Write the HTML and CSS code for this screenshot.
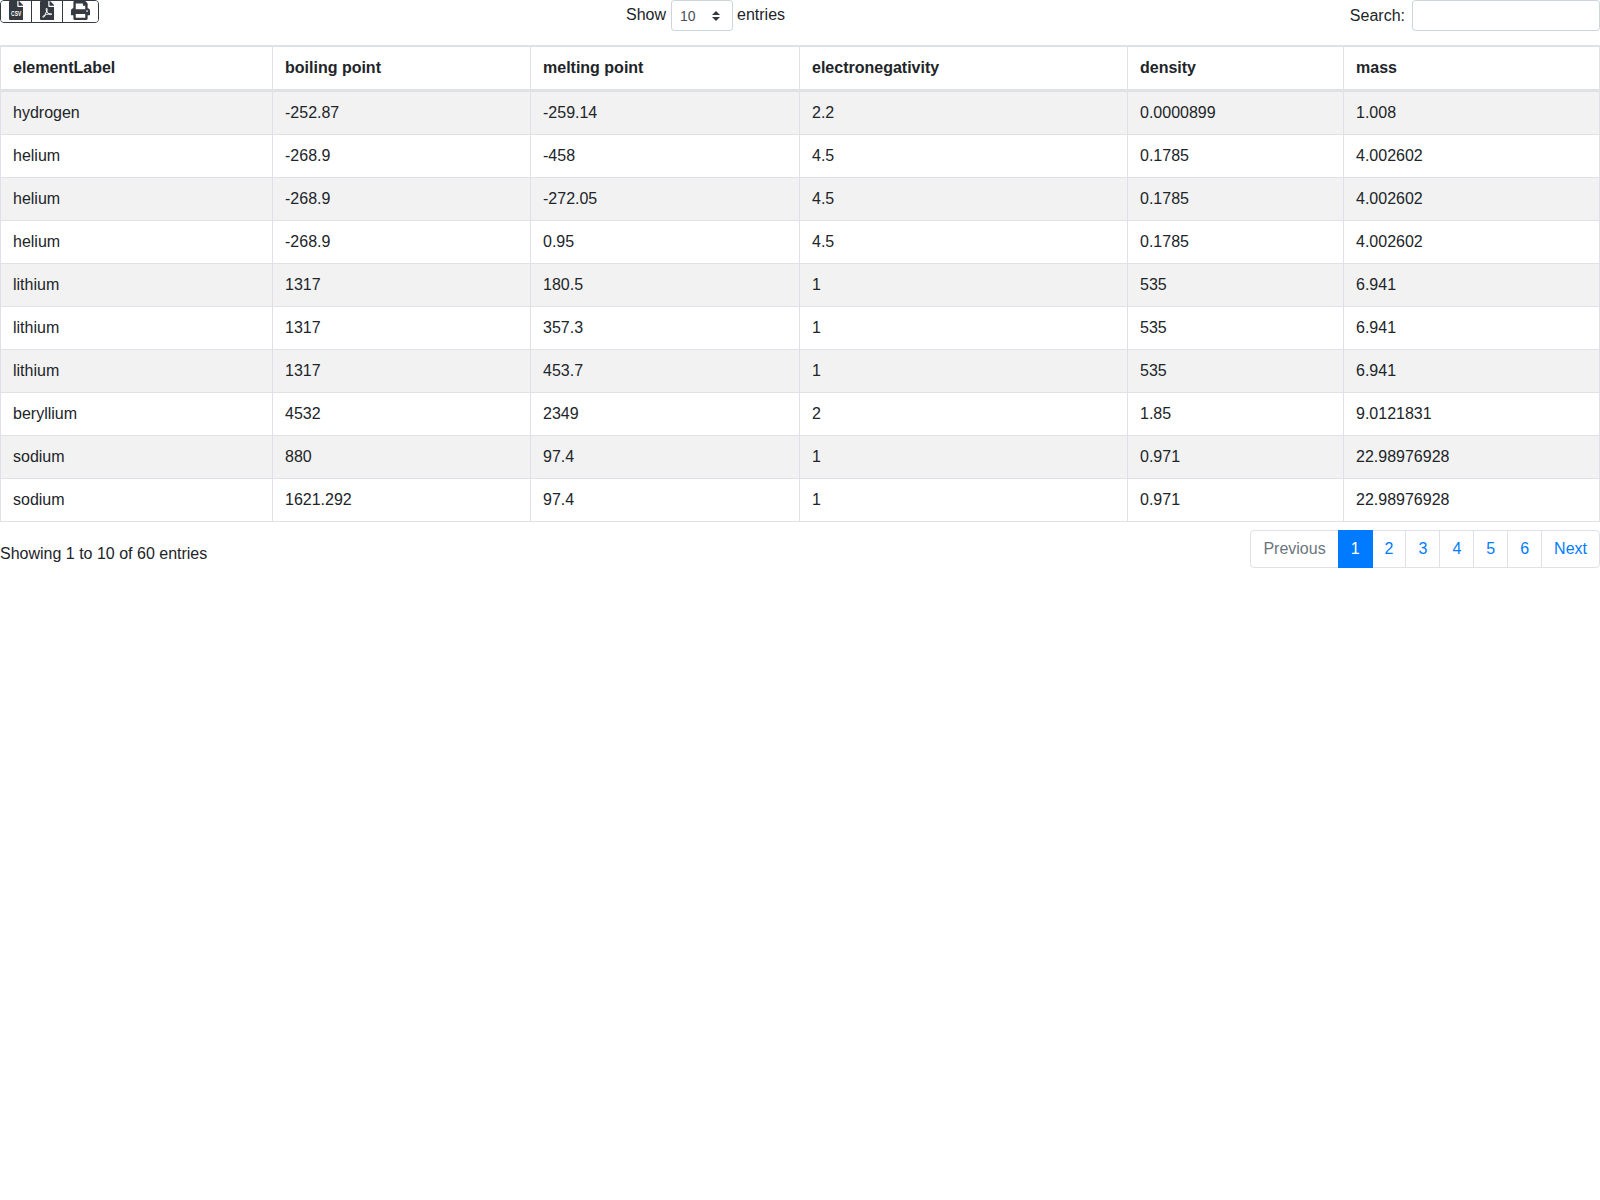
FILE: index.html
```html
<!DOCTYPE html>
<html lang="en">
<head>
<meta charset="utf-8">
<title>Elements</title>
<link rel="stylesheet" href="styles.css">
</head>
<body>
<div class="toolbar">
  <div class="btn-group">
    <button class="btn btn-file" type="button" aria-label="CSV">
      <svg class="icon file" viewBox="0 0 384 512"><path d="M224 136V0H24C10.7 0 0 10.7 0 24v464c0 13.3 10.7 24 24 24h336c13.3 0 24-10.7 24-24V160H248c-13.2 0-24-10.8-24-24zM377 105L279 7c-4.500-4.500-10.600-7-17-7h-6v128h128v-6.100c0-6.300-2.500-12.400-7-16.900z"/><text class="csv" x="192" y="400" text-anchor="middle" textLength="270" lengthAdjust="spacingAndGlyphs">CSV</text></svg>
    </button>
    <button class="btn btn-file-next" type="button" aria-label="PDF">
      <svg class="icon file" viewBox="0 0 384 512"><path d="M181.9 256.1c-5-16-4.900-46.900-2-46.900 8.400 0 7.600 36.900 2 46.900zm-1.700 47.200c-7.700 20.200-17.300 43.300-28.400 62.700 18.300-7 39-17.200 62.900-21.900-12.700-9.600-24.900-23.400-34.500-40.800zM86.100 428.100c0 .8 13.200-5.400 34.900-40.200-6.700 6.300-29.100 24.500-34.900 40.200zM248 160h136v328c0 13.300-10.700 24-24 24H24c-13.300 0-24-10.700-24-24V24C0 10.700 10.700 0 24 0h200v136c0 13.200 10.800 24 24 24zm-8 171.800c-20-12.200-33.300-29-42.700-53.800 4.500-18.500 11.600-46.600 6.200-64.200-4.700-29.400-42.400-26.500-47.800-6.800-5 18.300-.4 44.100 8.100 77-11.600 27.600-28.700 64.600-40.800 85.800-.1 0-.1.1-.2.1-27.100 13.900-73.600 44.500-54.500 68 5.600 6.900 16 10 21.500 10 17.900 0 35.700-18 61.100-61.800 25.800-8.500 54.100-19.100 79-23.200 21.700 11.800 47.100 19.500 64 19.500 29.200 0 31.200-32 19.700-43.400-13.900-13.600-54.300-9.700-73.600-7.200zM377 105L279 7c-4.500-4.500-10.600-7-17-7h-6v128h128v-6.100c0-6.300-2.500-12.400-7-16.900zm-74.100 255.300c4.100-2.700-2.500-11.900-42.800-9 37.100 15.800 42.800 9 42.800 9z"/></svg>
    </button>
    <button class="btn btn-print" type="button" aria-label="Print">
      <svg class="icon print" viewBox="0 0 512 512"><path d="M448 192V77.250c0-8.490-3.370-16.620-9.370-22.630L393.370 9.370c-6-6-14.140-9.370-22.630-9.370H96C78.330 0 64 14.330 64 32v160c-35.350 0-64 28.650-64 64v112c0 8.840 7.160 16 16 16h48v96c0 17.670 14.330 32 32 32h320c17.670 0 32-14.330 32-32v-96h48c8.840 0 16-7.160 16-16V256c0-35.350-28.650-64-64-64zm-64 256H128v-96h256v96zm0-224H128V64h192v48c0 8.840 7.160 16 16 16h48v96zm48 72c-13.250 0-24-10.750-24-24 0-13.260 10.750-24 24-24s24 10.740 24 24c0 13.250-10.750 24-24 24z"/></svg>
    </button>
  </div>
  <label class="length">Show <select class="select"><option>10</option><option>25</option><option>50</option><option>100</option></select> entries</label>
  <label class="search">Search: <input class="search-input" type="search"></label>
</div>

<table class="data">
  <thead>
    <tr><th>elementLabel</th><th>boiling point</th><th>melting point</th><th>electronegativity</th><th>density</th><th>mass</th></tr>
  </thead>
  <tbody>
    <tr><td>hydrogen</td><td>-252.87</td><td>-259.14</td><td>2.2</td><td>0.0000899</td><td>1.008</td></tr>
    <tr><td>helium</td><td>-268.9</td><td>-458</td><td>4.5</td><td>0.1785</td><td>4.002602</td></tr>
    <tr><td>helium</td><td>-268.9</td><td>-272.05</td><td>4.5</td><td>0.1785</td><td>4.002602</td></tr>
    <tr><td>helium</td><td>-268.9</td><td>0.95</td><td>4.5</td><td>0.1785</td><td>4.002602</td></tr>
    <tr><td>lithium</td><td>1317</td><td>180.5</td><td>1</td><td>535</td><td>6.941</td></tr>
    <tr><td>lithium</td><td>1317</td><td>357.3</td><td>1</td><td>535</td><td>6.941</td></tr>
    <tr><td>lithium</td><td>1317</td><td>453.7</td><td>1</td><td>535</td><td>6.941</td></tr>
    <tr><td>beryllium</td><td>4532</td><td>2349</td><td>2</td><td>1.85</td><td>9.0121831</td></tr>
    <tr><td>sodium</td><td>880</td><td>97.4</td><td>1</td><td>0.971</td><td>22.98976928</td></tr>
    <tr><td>sodium</td><td>1621.292</td><td>97.4</td><td>1</td><td>0.971</td><td>22.98976928</td></tr>
  </tbody>
</table>

<div class="footer">
  <div class="info">Showing 1 to 10 of 60 entries</div>
  <ul class="pagination">
    <li class="page disabled"><a href="#">Previous</a></li>
    <li class="page active"><a href="#">1</a></li>
    <li class="page"><a href="#">2</a></li>
    <li class="page"><a href="#">3</a></li>
    <li class="page"><a href="#">4</a></li>
    <li class="page"><a href="#">5</a></li>
    <li class="page"><a href="#">6</a></li>
    <li class="page"><a href="#">Next</a></li>
  </ul>
</div>
</body>
</html>
```
FILE: styles.css
```css
* { box-sizing: border-box; }
html, body { margin: 0; padding: 0; background: #fff; }
body {
  font-family: "Liberation Sans", Arial, sans-serif;
  font-size: 16px;
  line-height: 1.5;
  color: #212529;
}

.toolbar {
  display: grid;
  grid-template-columns: 626px auto 1fr;
  align-items: start;
  height: 45px;
}

.btn-group {
  display: inline-flex;
  justify-self: start;
  height: 23px;
  border: 1px solid #343a40;
  border-radius: 4px;
  overflow: hidden;
}
.btn {
  display: flex;
  align-items: flex-start;
  justify-content: center;
  height: 21px;
  padding: 0;
  margin: 0;
  border: 0;
  border-left: 1px solid #343a40;
  background: #fff;
  color: #343a40;
}
.btn-file { width: 30px; border-left: 0; }
.btn-file-next { width: 31px; }
.btn-print { width: 36px; }
.icon { display: block; height: 19px; fill: #343a40; }
.icon.file { width: 14.25px; }
.icon.print { width: 19px; }
.csv { font-family: "Liberation Sans", Arial, sans-serif; font-size: 170px; font-weight: 700; fill: #fff; }

.length, .search { display: flex; height: 31px; white-space: nowrap; }
.length { align-items: flex-start; line-height: 29px; }
.search { align-items: center; justify-self: end; }
.select {
  appearance: none;
  -webkit-appearance: none;
  width: 62px;
  height: 31px;
  margin: 0 4px 0 5px;
  padding: 4px 24px 4px 8px;
  border: 1px solid #ced4da;
  border-radius: 3.2px;
  font-family: inherit;
  font-size: 14px;
  color: #495057;
  background: #fff url("data:image/svg+xml,%3csvg xmlns='http://www.w3.org/2000/svg' width='4' height='5' viewBox='0 0 4 5'%3e%3cpath fill='%23343a40' d='M2 0L0 2h4zm0 5L0 3h4z'/%3e%3c/svg%3e") no-repeat right 12px center / 8px 10px;
}
.search-input {
  width: 188px;
  height: 31px;
  margin-left: 7px;
  padding: 4px 8px;
  border: 1px solid #ced4da;
  border-radius: 3.2px;
  background: #fff;
  font-size: 14px;
  color: #495057;
  appearance: none;
  -webkit-appearance: none;
}

.data {
  width: 100%;
  table-layout: fixed;
  border-collapse: collapse;
  border: 1px solid #dee2e6;
}
.data th, .data td {
  padding: 9px 12px;
  border: 1px solid #dee2e6;
  text-align: left;
  vertical-align: top;
  line-height: 24px;
}
.data th + th, .data td + td { padding-left: 12.5px; }
.data th { font-weight: 700; border-bottom-width: 3px; border-top-width: 2px; }
.data th:nth-child(1) { width: 271.5px; }
.data th:nth-child(2) { width: 258px; }
.data th:nth-child(3) { width: 269px; }
.data th:nth-child(4) { width: 328px; }
.data th:nth-child(5) { width: 216px; }
.data tbody tr:nth-child(odd) { background: rgba(0, 0, 0, .05); }

.footer {
  display: flex;
  justify-content: space-between;
  align-items: flex-start;
  margin-top: 8px;
}
.info { padding-top: 12px; white-space: nowrap; }
.pagination { display: flex; list-style: none; margin: 0; padding: 0; }
.page a {
  display: block;
  padding: 8px 12px;
  margin-left: -1px;
  border: 1px solid #dee2e6;
  line-height: 20px;
  color: #007bff;
  background: #fff;
  text-decoration: none;
}
.page:first-child a { margin-left: 0; border-radius: 4px 0 0 4px; }
.page:last-child a { border-radius: 0 4px 4px 0; }
.page.disabled a { color: #6c757d; }
.page.active a { position: relative; color: #fff; background: #007bff; border-color: #007bff; }
```
